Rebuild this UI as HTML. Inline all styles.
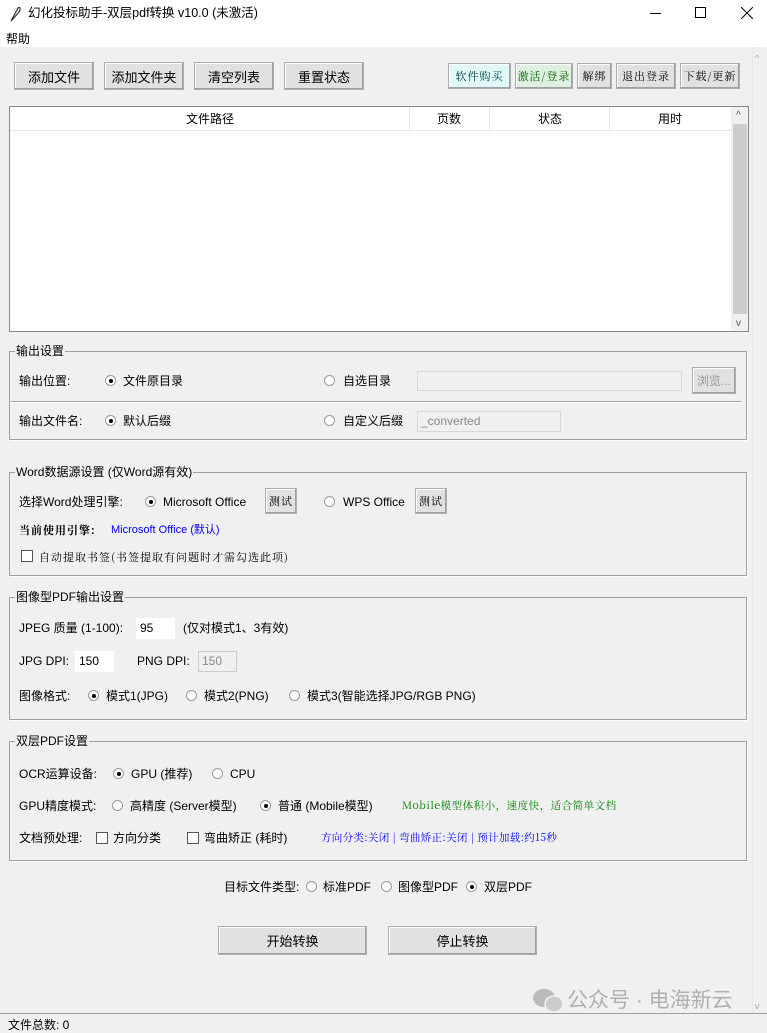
<!DOCTYPE html>
<html><head><meta charset="utf-8"><style>
*{margin:0;padding:0;box-sizing:border-box}
body{width:767px;height:1033px;position:relative;overflow:hidden;background:#f0f0f0;font-family:"Liberation Sans","Noto Sans CJK SC",sans-serif;font-size:12px;color:#000}
.a{position:absolute;white-space:nowrap;line-height:16px}
.btn{position:absolute;background:#e1e1e1;border:1px solid #adadad;box-shadow:inset -1px -1px 0 #a0a0a0,inset 1px 1px 0 #fff;display:flex;align-items:center;justify-content:center;font-size:13px}
.sb{font-size:11px;letter-spacing:1px;font-family:"Noto Serif CJK SC","Liberation Serif",serif}
.grp{position:absolute;border:1px solid #a0a0a0;box-shadow:1px 1px 0 #fff}
.gl{position:absolute;background:#f0f0f0;padding:0 1px;line-height:16px;font-size:12px}
.r{position:absolute;width:11px;height:11px;border-radius:50%;border:1px solid #9a9a9a;background:#fff}
.r.on::after{content:"";position:absolute;left:3px;top:3px;width:4px;height:4px;border-radius:50%;background:#000}
.c{position:absolute;width:12px;height:12px;border:1px solid #555;background:#fff}
.e{position:absolute;background:#fff;border:1px solid #c8c8c8;font-size:12px;line-height:18px;padding-left:3px}
</style></head><body>
<div style="position:absolute;left:0;top:0;width:767px;height:47px;background:#fff"></div>
<svg class="a" style="left:9px;top:6px" width="12" height="16" viewBox="0 0 12 16"><path d="M2 15 L9 2 C11 0 12 3 10 6 L4 13 Z" fill="none" stroke="#333" stroke-width="1.2"/></svg>
<div class="a" style="left:28px;top:5px;font-size:12.5px">幻化投标助手-双层pdf转换 v10.0 (未激活)</div>
<div class="a" style="left:650px;top:13px;width:11px;height:1px;background:#000"></div>
<div class="a" style="left:695px;top:7px;width:11px;height:11px;border:1px solid #000"></div>
<svg class="a" style="left:741px;top:7px" width="12" height="12"><path d="M0 0 L12 12 M12 0 L0 12" stroke="#000" stroke-width="1"/></svg>
<div class="a" style="left:6px;top:31px;font-size:12px">帮助</div>

<div class="a" style="left:752px;top:47px;width:15px;height:966px;background:#f0f0f0;border-left:1px solid #e8e8e8"></div>
<div class="a" style="left:755px;top:50px;font-size:9px;color:#aaa">^</div>
<div class="a" style="left:755px;top:998px;font-size:9px;color:#aaa">v</div>

<div class="btn" style="left:14px;top:62px;width:80px;height:28px">添加文件</div>
<div class="btn" style="left:104px;top:62px;width:80px;height:28px">添加文件夹</div>
<div class="btn" style="left:194px;top:62px;width:80px;height:28px">清空列表</div>
<div class="btn" style="left:284px;top:62px;width:80px;height:28px">重置状态</div>
<div class="btn sb" style="left:448px;top:63px;width:63px;height:26px;background:#e0f8f8;color:#004040">软件购买</div>
<div class="btn sb" style="left:515px;top:63px;width:58px;height:26px;background:#e0f0e0;color:#006000">激活/登录</div>
<div class="btn sb" style="left:577px;top:63px;width:35px;height:26px">解绑</div>
<div class="btn sb" style="left:616px;top:63px;width:60px;height:26px">退出登录</div>
<div class="btn sb" style="left:680px;top:63px;width:60px;height:26px">下载/更新</div>

<div class="a" style="left:9px;top:106px;width:740px;height:226px;background:#fff;border:1px solid #828790"></div>
<div class="a" style="left:10px;top:107px;width:721px;height:24px;border-bottom:1px solid #e5e5e5"></div>
<div class="a" style="left:409px;top:107px;width:1px;height:24px;background:#e5e5e5"></div>
<div class="a" style="left:489px;top:107px;width:1px;height:24px;background:#e5e5e5"></div>
<div class="a" style="left:609px;top:107px;width:1px;height:24px;background:#e5e5e5"></div>
<div class="a" style="left:186px;top:111px">文件路径</div>
<div class="a" style="left:437px;top:111px">页数</div>
<div class="a" style="left:538px;top:111px">状态</div>
<div class="a" style="left:658px;top:111px">用时</div>
<div class="a" style="left:731px;top:107px;width:17px;height:224px;background:#f0f0f0"></div>
<div class="a" style="left:733px;top:124px;width:14px;height:190px;background:#cdcdcd"></div>
<div class="a" style="left:736px;top:108px;font-size:10px;color:#555">^</div>
<div class="a" style="left:736px;top:316px;font-size:10px;color:#555">v</div>

<div class="grp" style="left:9px;top:351px;width:738px;height:89px"></div>
<div class="gl" style="left:15px;top:343px">输出设置</div>
<div class="a" style="left:19px;top:373px">输出位置:</div>
<div class="r on" style="left:105px;top:375px"></div><div class="a" style="left:123px;top:373px">文件原目录</div>
<div class="r" style="left:324px;top:375px"></div><div class="a" style="left:343px;top:373px">自选目录</div>
<div class="e" style="left:417px;top:371px;width:265px;height:20px;background:#f0f0f0;border-color:#d8d8d8"></div>
<div class="btn" style="left:692px;top:367px;width:44px;height:27px;color:#999;font-size:12px">浏览...</div>
<div class="a" style="left:11px;top:401px;width:730px;height:1px;background:#a0a0a0;box-shadow:0 1px 0 #fff"></div>
<div class="a" style="left:19px;top:413px">输出文件名:</div>
<div class="r on" style="left:105px;top:415px"></div><div class="a" style="left:123px;top:413px">默认后缀</div>
<div class="r" style="left:324px;top:415px"></div><div class="a" style="left:343px;top:413px">自定义后缀</div>
<div class="e" style="left:417px;top:411px;width:144px;height:21px;background:#f0f0f0;border-color:#d8d8d8;color:#888">_converted</div>

<div class="grp" style="left:9px;top:472px;width:738px;height:104px"></div>
<div class="gl" style="left:15px;top:464px">Word数据源设置 (仅Word源有效)</div>
<div class="a" style="left:19px;top:494px">选择Word处理引擎:</div>
<div class="r on" style="left:145px;top:496px"></div><div class="a" style="left:163px;top:494px">Microsoft Office</div>
<div class="btn sb" style="left:265px;top:488px;width:32px;height:26px;font-size:11px">测试</div>
<div class="r" style="left:324px;top:496px"></div><div class="a" style="left:343px;top:494px">WPS Office</div>
<div class="btn sb" style="left:415px;top:488px;width:32px;height:26px;font-size:11px">测试</div>
<div class="a sb" style="left:19px;top:522px;font-weight:bold">当前使用引擎:</div>
<div class="a" style="left:111px;top:522px;font-size:11px;color:#0000ff">Microsoft Office (默认)</div>
<div class="c" style="left:21px;top:550px"></div>
<div class="a sb" style="left:39px;top:549px">自动提取书签(书签提取有问题时才需勾选此项)</div>

<div class="grp" style="left:9px;top:597px;width:738px;height:123px"></div>
<div class="gl" style="left:15px;top:589px">图像型PDF输出设置</div>
<div class="a" style="left:19px;top:620px">JPEG 质量 (1-100):</div>
<div class="e" style="left:136px;top:618px;width:39px;height:21px;border-color:#fff">95</div>
<div class="a" style="left:183px;top:620px">(仅对模式1、3有效)</div>
<div class="a" style="left:19px;top:653px">JPG DPI:</div>
<div class="e" style="left:75px;top:651px;width:39px;height:21px;border-color:#fff">150</div>
<div class="a" style="left:137px;top:653px">PNG DPI:</div>
<div class="e" style="left:198px;top:651px;width:39px;height:21px;background:#f0f0f0;border-color:#ccc;color:#888">150</div>
<div class="a" style="left:19px;top:688px">图像格式:</div>
<div class="r on" style="left:88px;top:690px"></div><div class="a" style="left:106px;top:688px">模式1(JPG)</div>
<div class="r" style="left:186px;top:690px"></div><div class="a" style="left:204px;top:688px">模式2(PNG)</div>
<div class="r" style="left:289px;top:690px"></div><div class="a" style="left:307px;top:688px">模式3(智能选择JPG/RGB PNG)</div>

<div class="grp" style="left:9px;top:741px;width:738px;height:120px"></div>
<div class="gl" style="left:15px;top:733px">双层PDF设置</div>
<div class="a" style="left:19px;top:766px">OCR运算设备:</div>
<div class="r on" style="left:113px;top:768px"></div><div class="a" style="left:131px;top:766px">GPU (推荐)</div>
<div class="r" style="left:212px;top:768px"></div><div class="a" style="left:230px;top:766px">CPU</div>
<div class="a" style="left:19px;top:798px">GPU精度模式:</div>
<div class="r" style="left:112px;top:800px"></div><div class="a" style="left:130px;top:798px">高精度 (Server模型)</div>
<div class="r on" style="left:260px;top:800px"></div><div class="a" style="left:278px;top:798px">普通 (Mobile模型)</div>
<div class="a sb" style="left:402px;top:798px;font-size:10.5px;color:#008000;letter-spacing:0.5px">Mobile模型体积小，速度快，适合简单文档</div>
<div class="a" style="left:19px;top:830px">文档预处理:</div>
<div class="c" style="left:96px;top:832px"></div><div class="a" style="left:113px;top:830px">方向分类</div>
<div class="c" style="left:187px;top:832px"></div><div class="a" style="left:204px;top:830px">弯曲矫正 (耗时)</div>
<div class="a sb" style="left:321px;top:830px;font-size:10.5px;color:#0000ff;letter-spacing:0.3px">方向分类:关闭 | 弯曲矫正:关闭 | 预计加载:约15秒</div>

<div class="a" style="left:224px;top:879px">目标文件类型:</div>
<div class="r" style="left:306px;top:881px"></div><div class="a" style="left:323px;top:879px">标准PDF</div>
<div class="r" style="left:381px;top:881px"></div><div class="a" style="left:398px;top:879px">图像型PDF</div>
<div class="r on" style="left:466px;top:881px"></div><div class="a" style="left:484px;top:879px">双层PDF</div>

<div class="btn" style="left:218px;top:926px;width:149px;height:29px">开始转换</div>
<div class="btn" style="left:388px;top:926px;width:149px;height:29px">停止转换</div>

<svg class="a" style="left:532px;top:987px" width="32" height="28"><ellipse cx="12" cy="11" rx="11" ry="9" fill="#bbb"/><ellipse cx="22" cy="17" rx="9" ry="8" fill="#ccc" stroke="#f0f0f0" stroke-width="1.5"/></svg>
<div class="a" style="left:567px;top:988px;font-size:21px;line-height:26px;color:#b0b0b0">公众号 · 电海新云</div>

<div class="a" style="left:0;top:1013px;width:767px;height:1px;background:#a0a0a0"></div>
<div class="a" style="left:8px;top:1017px">文件总数: 0</div>
</body></html>
